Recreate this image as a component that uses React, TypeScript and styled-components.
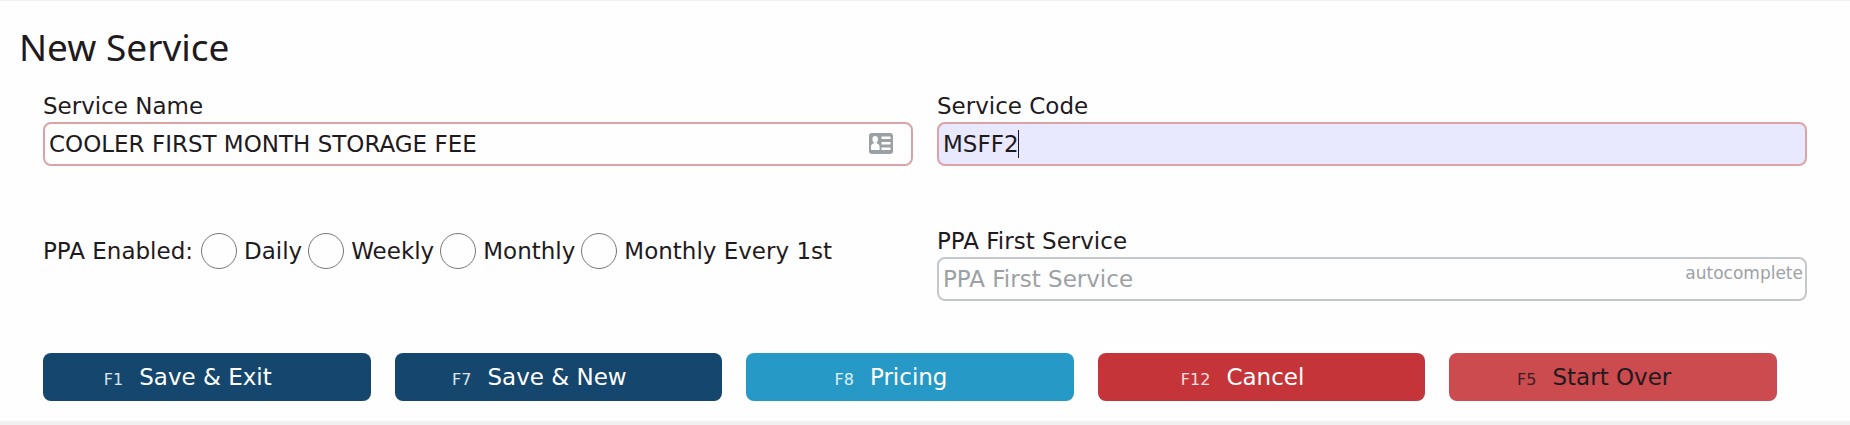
import React, { useLayoutEffect, useRef, useState } from 'react';
import styled, { createGlobalStyle } from 'styled-components';

const GlobalStyle = createGlobalStyle`
  *, *::before, *::after { box-sizing: border-box; }
  body {
    margin: 0;
    background: #f1f1f1;
    color: #1f1a1d;
    font-family: Verdana, "DejaVu Sans", sans-serif;
    font-size: 23px;
    line-height: 28px;
  }
`;

const Panel = styled.main`
  margin: 1px 0 4px;
  padding: 19px 43px 20px;
  background: #fefefe;
`;

const Title = styled.h1`
  margin: 0 0 18px -24px;
  font-family: "Segoe UI", "Noto Sans", sans-serif;
  font-size: 37px;
  font-weight: 400;
  line-height: 54px;
`;

const Form = styled.form`
  display: flex;
  flex-direction: column;
`;

const FieldGrid = styled.div`
  display: grid;
  grid-template-columns: 1fr 1fr;
  column-gap: 24px;
  row-gap: 61px;
`;

const Field = styled.div`
  display: flex;
  flex-direction: column;
  gap: 2px;
`;

const InputWrap = styled.div`
  position: relative;
  display: flex;
`;

const TextInput = styled.input<{ $required?: boolean; $active?: boolean }>`
  flex: 1;
  min-width: 0;
  height: 44px;
  padding: 0 4px;
  border: 2px solid ${(p) => (p.$required ? '#dca3a6' : '#c5c8cb')};
  border-radius: 8px;
  outline: none;
  background: ${(p) => (p.$active ? '#e8e8fe' : '#fefefe')};
  color: inherit;
  font-family: inherit;
  font-size: 23px;
  caret-color: ${(p) => (p.$active ? 'transparent' : 'auto')};

  &::placeholder {
    color: #9da1a5;
    opacity: 1;
  }
`;

const Caret = styled.span`
  position: absolute;
  top: 8px;
  width: 1px;
  height: 28px;
  background: #1f1a1d;
  pointer-events: none;
`;

const CardIcon = styled.svg`
  position: absolute;
  top: 11px;
  right: 20px;
  width: 24px;
  height: 21px;
`;

const Hint = styled.span`
  position: absolute;
  top: 6px;
  right: 4px;
  color: #9da1a5;
  font-size: 17px;
  line-height: 20px;
  pointer-events: none;
`;

const RadioGroup = styled.fieldset`
  display: flex;
  align-items: center;
  align-self: start;
  gap: 6px;
  margin: 0;
  padding: 6px 0 0;
  border: 0;
`;

const GroupName = styled.span`
  margin-right: 2px;
`;

const RadioLabel = styled.label`
  display: flex;
  align-items: center;
  gap: 7px;
  white-space: nowrap;
`;

const Radio = styled.input`
  appearance: none;
  width: 36px;
  height: 36px;
  margin: 0;
  border: 1px solid #767676;
  border-radius: 50%;
  background: #fefefe;

  &:checked {
    box-shadow: inset 0 0 0 8px #fefefe;
    background: #15466e;
  }
`;

const Actions = styled.div`
  display: grid;
  grid-template-columns: repeat(5, 1fr);
  gap: 24px;
  margin: 52px 30px 0 0;
`;

const ActionButton = styled.button<{ $fill: string; $ink?: string }>`
  display: flex;
  align-items: baseline;
  justify-content: center;
  gap: 16px;
  height: 48px;
  padding: 10px 38px 10px 0;
  border: 0;
  border-radius: 8px;
  background: ${(p) => p.$fill};
  color: ${(p) => p.$ink ?? '#ffffff'};
  font-family: inherit;
  font-size: 23px;
  line-height: 28px;
`;

const KeyHint = styled.small`
  font-size: 16px;
  opacity: 0.85;
`;

const periods = ['Daily', 'Weekly', 'Monthly', 'Monthly Every 1st'];

const actions = [
  { key: 'F1', label: 'Save & Exit', fill: '#15466e' },
  { key: 'F7', label: 'Save & New', fill: '#15466e' },
  { key: 'F8', label: 'Pricing', fill: '#2799c6' },
  { key: 'F12', label: 'Cancel', fill: '#c53439' },
  { key: 'F5', label: 'Start Over', fill: '#cb4b4f', ink: '#1f1a1d' },
];

function CodeInput() {
  const input = useRef<HTMLInputElement>(null);
  const [code, setCode] = useState('MSFF2');
  const [caretX, setCaretX] = useState(0);

  useLayoutEffect(() => {
    const el = input.current;
    const ctx = document.createElement('canvas').getContext('2d');
    if (!el || !ctx) return;
    const style = getComputedStyle(el);
    ctx.font = `${style.fontSize} ${style.fontFamily}`;
    const start = parseInt(style.paddingLeft) + parseInt(style.borderLeftWidth);
    setCaretX(start + Math.floor(ctx.measureText(code).width));
  }, [code]);

  return (
    <InputWrap>
      <TextInput
        id="service-code"
        ref={input}
        $required
        $active
        value={code}
        onChange={(e) => setCode(e.target.value)}
      />
      <Caret style={{ left: caretX }} />
    </InputWrap>
  );
}

export default function App() {
  return (
    <>
      <GlobalStyle />
      <Panel>
        <Title>New Service</Title>
        <Form onSubmit={(e) => e.preventDefault()}>
          <FieldGrid>
            <Field>
              <label htmlFor="service-name">Service Name</label>
              <InputWrap>
                <TextInput id="service-name" $required defaultValue="COOLER FIRST MONTH STORAGE FEE" />
                <CardIcon viewBox="0 0 24 21" aria-hidden="true">
                  <rect width="24" height="21" rx="3" fill="#9ba0a5" />
                  <g fill="#fefefe">
                    <ellipse cx="6.200" cy="6.300" rx="2.800" ry="3.300" />
                    <path d="M4.800 8h2.800v2.200c1.800.5 3 1.500 3 3.300V17H2v-3.500c0-1.800 1-2.800 2.800-3.300z" />
                    <path d="M12.500 3.500h9v2.500h-9zM12.500 9h9v2.500h-9zM12.500 14.500h9V17h-9z" />
                  </g>
                </CardIcon>
              </InputWrap>
            </Field>
            <Field>
              <label htmlFor="service-code">Service Code</label>
              <CodeInput />
            </Field>
            <RadioGroup aria-labelledby="ppa-enabled">
              <GroupName id="ppa-enabled">PPA Enabled:</GroupName>
              {periods.map((period) => (
                <RadioLabel key={period}>
                  <Radio type="radio" name="ppa" value={period} />
                  {period}
                </RadioLabel>
              ))}
            </RadioGroup>
            <Field>
              <label htmlFor="first-service">PPA First Service</label>
              <InputWrap>
                <TextInput id="first-service" placeholder="PPA First Service" />
                <Hint>autocomplete</Hint>
              </InputWrap>
            </Field>
          </FieldGrid>
          <Actions>
            {actions.map((a) => (
              <ActionButton key={a.key} type="button" $fill={a.fill} $ink={a.ink}>
                <KeyHint>{a.key}</KeyHint>
                {a.label}
              </ActionButton>
            ))}
          </Actions>
        </Form>
      </Panel>
    </>
  );
}
